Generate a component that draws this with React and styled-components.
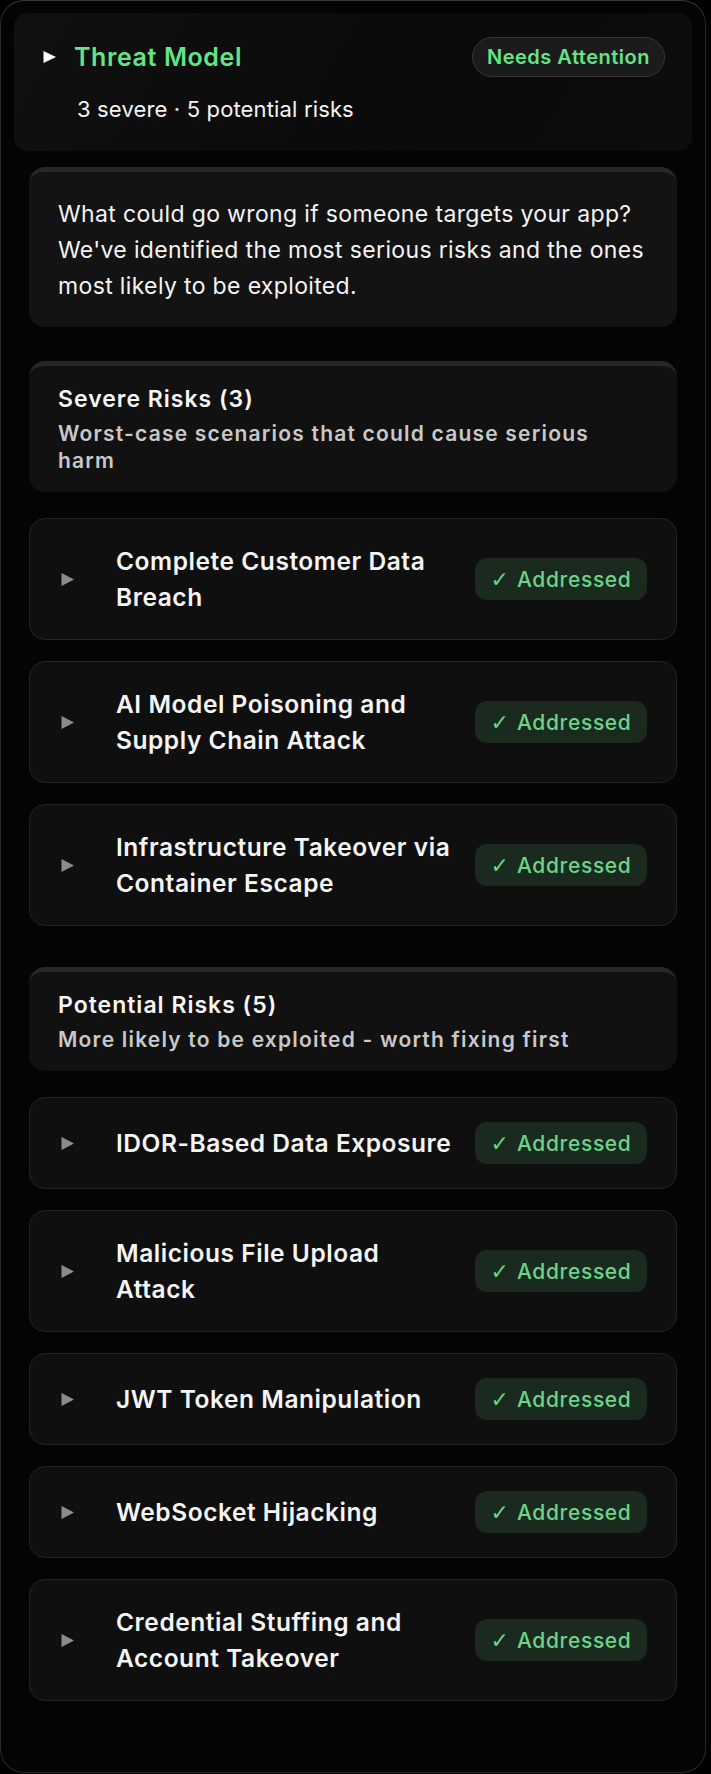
import styled, { createGlobalStyle } from "styled-components";

const GlobalStyle = createGlobalStyle`
  * { box-sizing: border-box; }
  body {
    margin: 0;
    background: #000;
    font-family: "Inter", "Noto Sans", sans-serif;
    color: #f2f2f2;
  }
`;

const severeRisks = [
  "Complete Customer Data Breach",
  "AI Model Poisoning and Supply Chain Attack",
  "Infrastructure Takeover via Container Escape",
];

const potentialRisks = [
  "IDOR-Based Data Exposure",
  "Malicious File Upload Attack",
  "JWT Token Manipulation",
  "WebSocket Hijacking",
  "Credential Stuffing and Account Takeover",
];

const Caret = ({ color, h = 13 }) => (
  <svg width="13" height={h} viewBox={`0 0 13 ${h}`}>
    <polygon points={`0.5,0 13,${h / 2} 0.5,${h}`} fill={color} />
  </svg>
);

const RiskRow = ({ title }) => (
  <RiskCard>
    <CaretBox>
      <Caret color="#8c8c8c" />
    </CaretBox>
    <RiskTitle>{title}</RiskTitle>
    <StatusBadge>
      <Check>✓</Check>Addressed
    </StatusBadge>
  </RiskCard>
);

const RiskSection = ({ title, subtitle, items, spacing }) => (
  <Section $spacing={spacing}>
    <SectionHead>
      <SectionTitle>{title}</SectionTitle>
      <SectionSub>{subtitle}</SectionSub>
    </SectionHead>
    <RiskList>
      {items.map((item) => (
        <RiskRow key={item} title={item} />
      ))}
    </RiskList>
  </Section>
);

const App = () => {
  return (
    <>
      <GlobalStyle />
      <Panel>
        <Header>
          <HeaderRow>
            <Caret color="#ffffff" h={12} />
            <HeaderTitle>Threat Model</HeaderTitle>
            <AttentionPill>Needs Attention</AttentionPill>
          </HeaderRow>
          <HeaderMeta>3 severe · 5 potential risks</HeaderMeta>
        </Header>
        <Body>
          <Intro>
            What could go wrong if someone targets your app? We've identified
            the most serious risks and the ones most likely to be exploited.
          </Intro>
          <RiskSection
            title="Severe Risks (3)"
            subtitle="Worst-case scenarios that could cause serious harm"
            items={severeRisks}
            spacing={34}
          />
          <RiskSection
            title="Potential Risks (5)"
            subtitle="More likely to be exploited - worth fixing first"
            items={potentialRisks}
            spacing={41}
          />
        </Body>
      </Panel>
    </>
  );
};

const Panel = styled.div`
  width: 706px;
  min-height: 1773px;
  padding: 12px 13px 68px;
  border: 1px solid #2a2a2a;
  border-top-color: #2c3a30;
  border-radius: 24px;
  background: #040404;
`;

const Header = styled.div`
  padding: 24px 27px 28px 29px;
  border-radius: 14px;
  background: linear-gradient(120deg, #101010 0%, #0a0a0a 60%, #0c0d0c 100%);
`;

const HeaderRow = styled.div`
  display: flex;
  align-items: center;
  height: 40px;
  svg {
    flex: none;
  }
`;

const HeaderTitle = styled.h2`
  flex: 1;
  margin: 0 0 0 18px;
  font-size: 25px;
  letter-spacing: 0.6px;
  font-weight: 600;
  color: #62e585;
`;

const AttentionPill = styled.span`
  display: inline-flex;
  align-items: center;
  justify-content: center;
  width: 193px;
  height: 40px;
  border: 1.5px solid #363636;
  border-radius: 20px;
  background: #1b1b1b;
  font-size: 20px;
  letter-spacing: 0.5px;
  font-weight: 600;
  color: #62e585;
`;

const HeaderMeta = styled.div`
  margin-top: 18px;
  padding-left: 34px;
  font-size: 22px;
  letter-spacing: 0.15px;
  line-height: 28px;
  color: #f4f4f4;
`;

const Body = styled.div`
  padding: 16px 15px 0;
`;

const Intro = styled.p`
  margin: 0;
  padding: 24px 16px 23px 29px;
  border-top: 5px solid #272727;
  border-radius: 16px;
  background: #131313;
  font-size: 23px;
  letter-spacing: 0.35px;
  line-height: 36px;
  color: #f4f4f4;
`;

const Section = styled.section`
  margin-top: ${({ $spacing }) => $spacing}px;
`;

const SectionHead = styled.div`
  padding: 18px 29px 18px;
  border-top: 5px solid #272727;
  border-radius: 16px;
  background: #111;
`;

const SectionTitle = styled.h3`
  margin: 0;
  font-size: 23px;
  letter-spacing: 1px;
  line-height: 31px;
  font-weight: 600;
  color: #f6f6f6;
`;

const SectionSub = styled.p`
  margin: 5px 0 0;
  font-size: 21px;
  letter-spacing: 1.2px;
  line-height: 27px;
  font-weight: 600;
  color: #c8c8c8;
`;

const RiskList = styled.div`
  display: flex;
  flex-direction: column;
  gap: 21px;
  margin-top: 26px;
`;

const RiskCard = styled.div`
  display: flex;
  align-items: center;
  padding: 24px 29px 24px 31px;
  border: 1px solid #232323;
  border-radius: 16px;
  background: #0f0f0f;
`;

const CaretBox = styled.span`
  display: flex;
  flex: none;
`;

const RiskTitle = styled.div`
  flex: 1;
  margin: 0 14px 0 42px;
  font-size: 24.5px;
  letter-spacing: 0.55px;
  line-height: 36px;
  font-weight: 600;
  color: #f5f5f5;
`;

const StatusBadge = styled.span`
  display: inline-flex;
  align-items: center;
  justify-content: center;
  flex: none;
  width: 172px;
  height: 42px;
  border-radius: 12px;
  background: #1a2a1e;
  font-size: 21px;
  letter-spacing: 0.65px;
  font-weight: 500;
  color: #6dd389;
`;

const Check = styled.span`
  margin-right: 8px;
  font-family: "DejaVu Sans", sans-serif;
  font-size: 22px;
  letter-spacing: 0;
`;

export default App;
